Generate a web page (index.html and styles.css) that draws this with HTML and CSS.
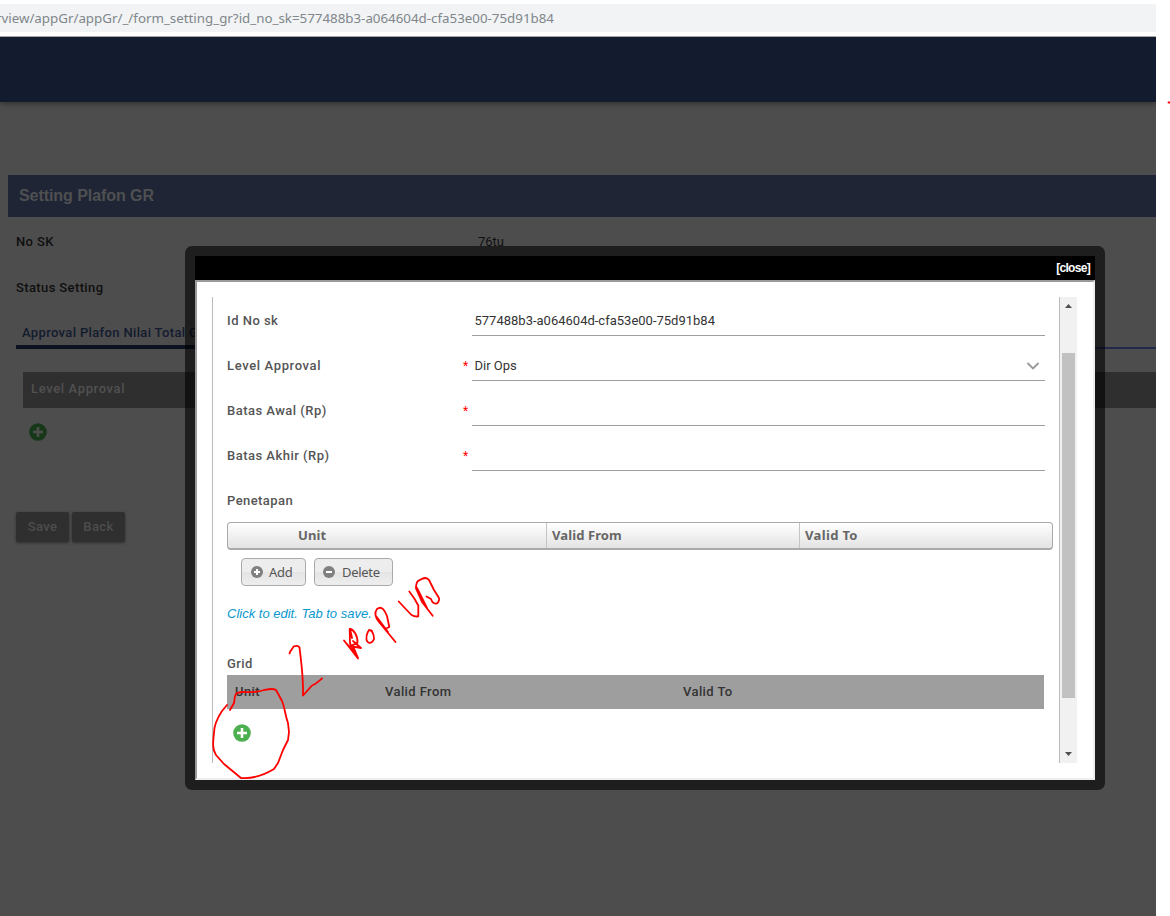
FILE: index.html
```html
<!doctype html>
<html lang="id">

<head>
    <meta charset="UTF-8" />
    <title>Setting Plafon GR</title>
    <link rel="stylesheet" href="styles.css">
</head>

<body>
    <div class="addressbar"><span class="addressbar__url">rview/appGr/appGr/_/form_setting_gr?id_no_sk=577488b3-a064604d-cfa53e00-75d91b84</span></div>
    <div class="page">
        <header class="header"></header>
        <main class="main">
            <h1 class="heading">Setting Plafon GR</h1>
            <div class="info"><b class="info__label">No SK</b><span>76tu</span></div>
            <div class="info info--status"><b class="info__label">Status Setting</b></div>
            <div class="tabs"><span class="tab">Approval Plafon Nilai Total GR</span></div>
            <div class="levels">Level Approval</div>
            <svg class="plus plus--dim" viewBox="0 0 18 18"><circle cx="9" cy="9" r="8.8" /><path d="M9 4v10M4 9h10" /></svg>
            <div class="actions">
                <button class="action">Save</button>
                <button class="action">Back</button>
            </div>
        </main>
    </div>

    <div class="modal">
        <div class="modal__bar"><span class="close">[close]</span></div>
        <div class="modal__body">
            <div class="frame">
                <div class="form">
                    <div class="field">
                        <label class="field__label">Id No sk</label>
                        <span class="field__mark"></span>
                        <div class="field__value">577488b3-a064604d-cfa53e00-75d91b84</div>
                    </div>
                    <div class="field">
                        <label class="field__label field__label--level">Level Approval</label>
                        <span class="field__mark">*</span>
                        <div class="field__value field__value--select"><span>Dir Ops</span>
                            <svg class="chevron" viewBox="0 0 14 8"><path d="M1.5 1l5.500 5.400L12.500 1" /></svg>
                        </div>
                    </div>
                    <div class="field">
                        <label class="field__label">Batas Awal (Rp)</label>
                        <span class="field__mark">*</span>
                        <div class="field__value"></div>
                    </div>
                    <div class="field">
                        <label class="field__label">Batas Akhir (Rp)</label>
                        <span class="field__mark">*</span>
                        <div class="field__value"></div>
                    </div>
                    <label class="section">Penetapan</label>
                    <div class="sheet">
                        <div class="sheet__cell sheet__cell--unit">Unit</div>
                        <div class="sheet__cell">Valid From</div>
                        <div class="sheet__cell sheet__cell--to">Valid To</div>
                    </div>
                    <div class="buttons">
                        <button class="button button--add"><svg viewBox="0 0 12 12"><circle cx="6" cy="6" r="6" /><path d="M6 3v6M3 6h6" /></svg><span>Add</span></button>
                        <button class="button button--delete"><svg viewBox="0 0 12 12"><circle cx="6" cy="6" r="6" /><path d="M3 6h6" /></svg><span>Delete</span></button>
                    </div>
                    <p class="hint"><span>Click to edit. Tab to save.</span></p>
                    <label class="section section--grid">Grid</label>
                    <div class="grid">
                        <span>Unit</span><span>Valid From</span><span>Valid To</span>
                    </div>
                    <svg class="plus" viewBox="0 0 18 18"><circle cx="9" cy="9" r="8.8" /><path d="M9 4v10M4 9h10" /></svg>
                </div>
                <div class="scrollbar">
                    <svg class="arrow" viewBox="0 0 7 4"><path d="M0 4L3.500 0 7 4z" /></svg>
                    <div class="thumb"></div>
                    <svg class="arrow" viewBox="0 0 7 4"><path d="M0 0h7L3.500 4z" /></svg>
                </div>
            </div>
        </div>
    </div>

    <!-- pen notes -->
    <svg class="notes" viewBox="0 0 1170 916">
        <path d="M230 710l4-7c1-4 0-8 3-10l5-1c8 0 15 1 22-2 5-1 9-2 12 0l6 11c3 7 3 14 6 22l1 9-1 8-5 10-5 13-4 6c-10 6-22 10-33 9l-17-14-8-9c-4-6-3-13-2-22 0-9 4-16 8-22l5-6" />
        <path d="M289.500 653.500c1-4 3-4 4-7 3-1 5-1 6 1 2 17 4 29 3.500 48l9-10c3-1 4-2 10-7" />
        <path d="M344 640.500L358 658.500 350 643.500 349.700 629C353 629 358 635 357.500 643L350 646 361 648 353 641M347 644L358 658 353 646M350 629L352 638" />
        <path d="M372 631C369 628 366 633 366.500 640 368 644 372 644 374 639 374 634 372 630 369 630" />
        <path d="M395.500 642L379 622C375 617 374 613 377 609 382 605 385 611 387 616L389.300 627 385 629M376 616L388 632" />
        <path d="M398.700 601.500L411.500 615Q415 617 418.300 616.300L418.300 605.500 414 598 409.300 591.500" />
        <path d="M432.700 615.700L422 602 416 588.500C416 585 416 583 418 581 424 577 427 577 429 580L434 590 439 598C440 601 437 604 436.500 603.500 433 604 432 602 431 599L426.500 596.500M417 588L427 608" />
        <path d="M1168.500 102.500h2" />
    </svg>
</body>

</html>
```
FILE: styles.css
```css
* {
    margin: 0;
    padding: 0;
    box-sizing: border-box;
}

body {
    position: relative;
    height: 916px;
    overflow: hidden;
    background: white;
    font-family: Roboto, sans-serif;
    font-size: 13px;
    color: #333;
}

button {
    font-family: inherit;
}

.addressbar {
    width: 1156px;
    height: 37px;
    border-top: 4px solid white;
    border-bottom: 1px solid #a6a6a6;
    background: linear-gradient(#f1f3f4 28px, white 28px);
}

.addressbar__url {
    display: flex;
    justify-content: flex-end;
    width: 554px;
    font: 13.33px/28px 'Noto Sans', sans-serif;
    color: #80868b;
    white-space: nowrap;
}

.page {
    width: 1156px;
    height: 879px;
    overflow: hidden;
    background: #4d4d4d;
}

.header {
    height: 65px;
    background: #131b2e;
    box-shadow: 0 2px 5px rgba(0, 0, 0, .35);
}

.main {
    padding: 73px 0 0 8px;
}

.heading {
    height: 42px;
    padding-left: 11px;
    background: #1f2535;
    font: bold 16px/41px 'Liberation Sans', sans-serif;
    letter-spacing: -.06px;
    color: #4f5052;
}

.info {
    display: flex;
    height: 46px;
    padding-left: 8px;
    font-size: 13px;
    line-height: 49px;
    color: #0f0f0f;
}

.info__label {
    width: 462px;
    font-weight: 500;
    letter-spacing: .38px;
}

.tabs {
    display: flex;
    height: 41px;
    margin-left: 8px;
    padding-top: 13px;
    background: linear-gradient(#23294a, #23294a) 0 38px / 100% 2px no-repeat;
}

.tab {
    width: 190px;
    height: 27px;
    padding-left: 6px;
    border-bottom: 4px solid #0c1220;
    font-weight: 500;
    line-height: 22px;
    letter-spacing: .35px;
    color: #131b2e;
    white-space: nowrap;
}

.levels {
    height: 36px;
    margin: 22px 0 0 15px;
    padding-left: 8px;
    background: #2f2f2f;
    font-weight: 500;
    line-height: 33px;
    letter-spacing: .63px;
    color: #515151;
}

.plus {
    display: block;
    width: 18px;
    height: 18px;
    margin: 15px 0 0 5.5px;
    fill: #4caf50;
}

.plus path {
    stroke: white;
    stroke-width: 2.6;
}

.plus--dim {
    margin: 15px 0 0 21px;
    fill: #173818;
}

.plus--dim path {
    stroke: #4d4d4d;
}

.actions {
    display: flex;
    gap: 3px;
    margin: 71px 0 0 8px;
}

.action {
    width: 53px;
    height: 30px;
    padding-bottom: 2px;
    border: 0;
    border-radius: 2px;
    background: #2f2f2f;
    box-shadow: 0 1px 3px rgba(0, 0, 0, .4);
    font-size: 13px;
    font-weight: 500;
    letter-spacing: .4px;
    color: #4d4d4d;
}

.modal {
    position: absolute;
    left: 185px;
    top: 246px;
    width: 920px;
    height: 544px;
    padding: 10px;
    border-radius: 7px;
    background: rgba(0, 0, 0, .6);
}

.modal__bar {
    height: 24px;
    padding-right: 5px;
    background: black;
    font: bold 12px/24px 'Liberation Sans', sans-serif;
    letter-spacing: -.7px;
    color: white;
    text-align: right;
}

.modal__body {
    height: 500px;
    padding: 15px 16px 15px 15px;
    border: 2px solid;
    border-color: #9a9a9a #eee #eee #9a9a9a;
    background: white;
}

.frame {
    display: flex;
    height: 466px;
    border-left: 1px solid #bbb;
}

.form {
    width: 846px;
    padding-left: 14px;
}

.field {
    display: flex;
    width: 818px;
    height: 45px;
    line-height: 48px;
}

.field__label {
    width: 236px;
    font-weight: 500;
    letter-spacing: .48px;
    color: #555;
}

.field__label--level {
    letter-spacing: .63px;
}

.field__mark {
    width: 8.5px;
    font-size: 12px;
    color: red;
}

.field__value {
    flex: 1;
    height: 39px;
    margin-left: .5px;
    padding-left: 2.5px;
    border-bottom: 1px solid #9e9e9e;
}

.field__value--select {
    display: flex;
    justify-content: space-between;
}

.chevron {
    width: 14px;
    height: 8px;
    margin: 20px 5px 0 0;
    fill: none;
    stroke: #999;
    stroke-width: 2;
}

.section {
    display: block;
    height: 45px;
    font-weight: 500;
    line-height: 48px;
    letter-spacing: .42px;
    color: #555;
}

.sheet {
    display: grid;
    grid-template-columns: 318px 253px 1fr;
    width: 826px;
    height: 28px;
    border: 1px solid #aaa;
    border-bottom-width: 2px;
    border-radius: 4px;
    background: linear-gradient(#fff, #e3e3e3);
    font: bold 13px/25px 'Noto Sans', sans-serif;
    letter-spacing: .1px;
    color: #666;
}

.sheet__cell {
    padding-left: 5px;
}

.sheet__cell + .sheet__cell {
    border-left: 1px solid #c4c4c4;
}

.sheet__cell--unit {
    padding-left: 70px;
}

.sheet__cell--to {
    letter-spacing: .35px;
}

.buttons {
    display: flex;
    gap: 8px;
    padding: 8px 0 0 14px;
}

.button {
    display: flex;
    align-items: center;
    width: 65px;
    height: 28px;
    padding-left: 9px;
    gap: 6px;
    border: 1px solid #aaa;
    border-radius: 4px;
    background: linear-gradient(#ededed 50%, #e4e4e4 50%, #eee);
    font: 13px 'Noto Sans', sans-serif;
    letter-spacing: -.3px;
    color: #555;
}

.button--delete {
    width: 79px;
    padding-left: 8px;
    gap: 7px;
}

.button svg {
    width: 12px;
    height: 12px;
    fill: #808080;
    stroke-width: 2;
}

.button path {
    stroke: white;
}

.hint {
    margin-top: 18px;
    height: 19px;
    font: italic 13px/19px 'Liberation Sans', sans-serif;
    color: #0a98cf;
}

.section--grid {
    height: 52px;
    padding-top: 17px;
}

.grid {
    display: grid;
    grid-template-columns: 150px 298px 1fr;
    width: 817px;
    height: 34px;
    padding-left: 8px;
    background: #9e9e9e;
    font-weight: 500;
    line-height: 33px;
    letter-spacing: .4px;
}

.scrollbar {
    display: flex;
    flex-direction: column;
    align-items: center;
    justify-content: space-between;
    width: 18px;
    padding: 7px 0;
    border-left: 1px solid #bbb;
    background: #f1f1f1;
}

.arrow {
    width: 7px;
    height: 4px;
    fill: #505050;
}

.thumb {
    width: 13px;
    height: 345px;
    margin-bottom: 10px;
    background: #c1c1c1;
}

.notes {
    position: absolute;
    left: 0;
    top: 0;
    width: 1170px;
    height: 916px;
    fill: none;
    stroke: red;
    stroke-width: 1.8;
    stroke-linejoin: round;
    stroke-linecap: round;
    pointer-events: none;
}
```
